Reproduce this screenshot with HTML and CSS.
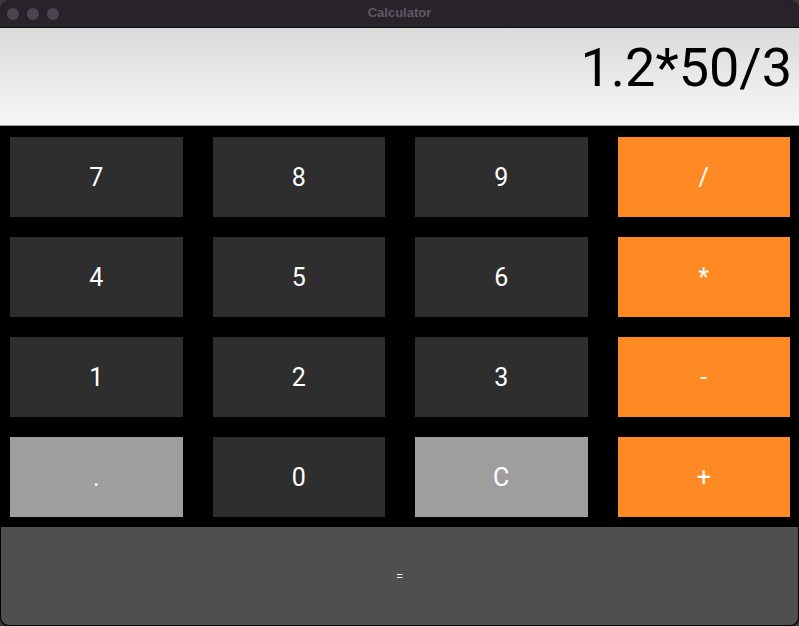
FILE: index.html
```html
<!DOCTYPE html>
<html>
<head>
<meta charset="utf-8">
<title>Calculator</title>
<link rel="stylesheet" href="styles.css">
</head>
<body>
<div class="window">
  <div class="titlebar">
    <div class="lights">
      <span class="light"></span>
      <span class="light"></span>
      <span class="light"></span>
    </div>
    <div class="title">Calculator</div>
  </div>
  <div class="display">1.2*50/3</div>
  <div class="keypad">
    <div class="key num">7</div>
    <div class="key num">8</div>
    <div class="key num">9</div>
    <div class="key op">/</div>
    <div class="key num">4</div>
    <div class="key num">5</div>
    <div class="key num">6</div>
    <div class="key op">*</div>
    <div class="key num">1</div>
    <div class="key num">2</div>
    <div class="key num">3</div>
    <div class="key op">-</div>
    <div class="key light-key">.</div>
    <div class="key num">0</div>
    <div class="key light-key">C</div>
    <div class="key op">+</div>
  </div>
  <div class="equals">=</div>
</div>
</body>
</html>
```

FILE: styles.css
```css
html, body {
  margin: 0;
  padding: 0;
  background: #3a3a3a;
  width: 799px;
  height: 626px;
  overflow: hidden;
}
.window {
  width: 799px;
  height: 626px;
  display: flex;
  flex-direction: column;
  background: #000;
  border-radius: 10px 10px 8px 8px;
  overflow: hidden;
  font-family: Roboto, "Liberation Sans", sans-serif;
}
.titlebar {
  height: 27px;
  flex: 0 0 27px;
  background: #28222b;
  border-bottom: 1px solid #0e0c10;
  display: flex;
  align-items: center;
  position: relative;
}
.lights {
  display: flex;
  gap: 8px;
  padding-left: 7px;
}
.light {
  width: 12px;
  height: 12px;
  border-radius: 50%;
  background: #4a4550;
}
.title {
  position: absolute;
  left: 0;
  right: 0;
  top: 5px;
  text-align: center;
  font-family: "Liberation Sans", Arial, sans-serif;
  font-weight: bold;
  font-size: 13px;
  color: #5f5964;
}
.display {
  height: 98px;
  flex: 0 0 98px;
  background: linear-gradient(#dadada, #f7f7f7);
  border-bottom: 1px solid #9a9a9a;
  color: #000;
  font-size: 54px;
  text-align: right;
  padding-right: 7px;
  line-height: 80px;
  box-sizing: border-box;
}
.keypad {
  display: grid;
  grid-template-columns: repeat(4, 1fr);
  grid-template-rows: repeat(4, 80px);
  column-gap: 30px;
  row-gap: 20px;
  padding: 11px 9px 10px 10px;
  background: #000;
}
.key {
  display: flex;
  align-items: center;
  justify-content: center;
  color: #fff;
  font-size: 25px;
}
.num {
  background: #2e2e2e;
}
.op {
  background: #ff8a24;
}
.light-key {
  background: #9e9e9e;
}
.equals {
  flex: 1;
  margin: 0 1px 1px 1px;
  background: #4f4f4f;
  border-radius: 0 0 8px 8px;
  color: #fff;
  font-size: 13px;
  display: flex;
  align-items: center;
  justify-content: center;
}
```
